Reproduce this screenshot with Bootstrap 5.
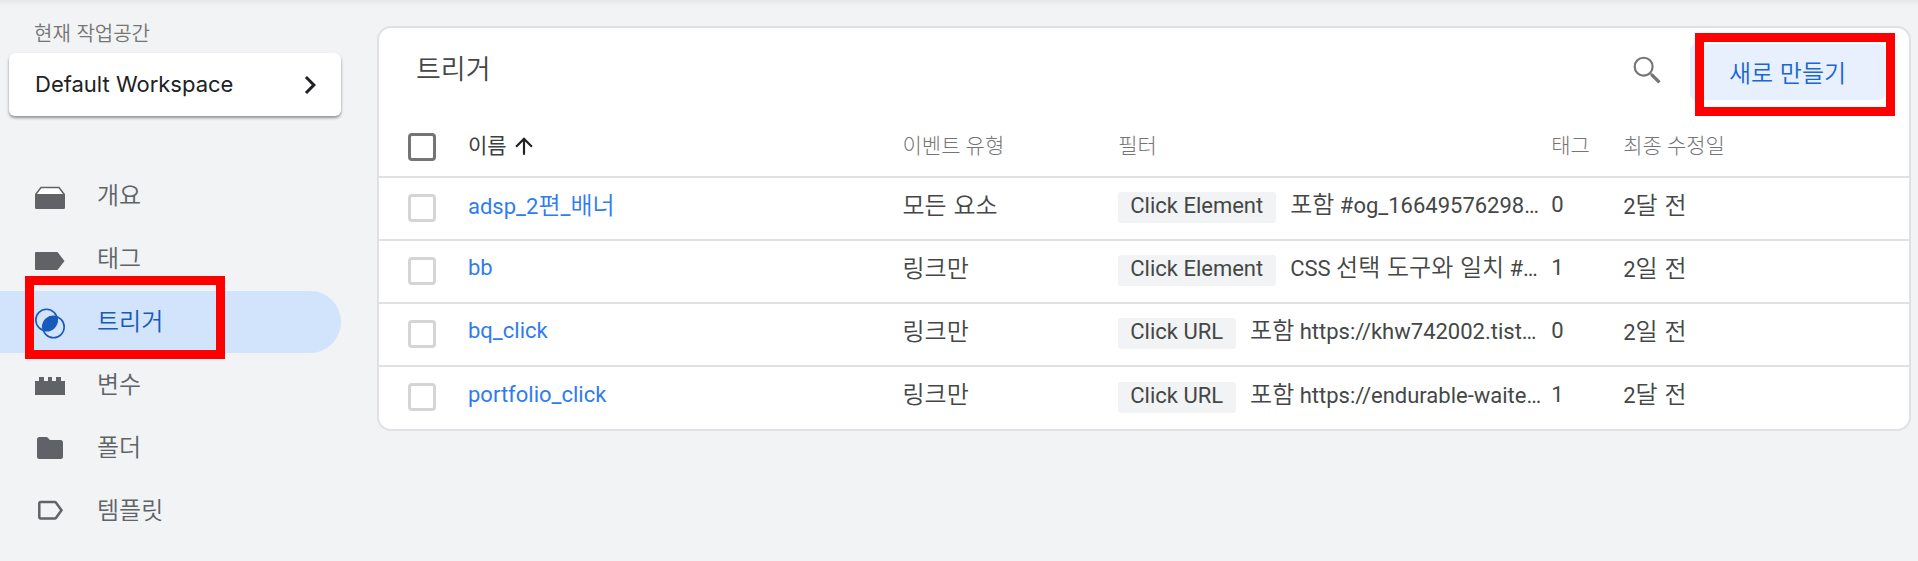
<!DOCTYPE html>
<html lang="ko">
<head>
<meta charset="utf-8">
<meta name="viewport" content="width=device-width, initial-scale=1">
<title>트리거</title>
<link href="https://cdn.jsdelivr.net/npm/bootstrap@5.3.0/dist/css/bootstrap.min.css" rel="stylesheet">
<style>
body{background:#f1f3f4;color:#444746;font-family:Roboto,"Noto Sans CJK KR",sans-serif;font-size:22px;line-height:32px}
.app-shell{min-height:100vh;background:linear-gradient(#e4e6e8,#f1f3f4 6px)}
.side-panel{width:377px}
.ko{font-family:"Noto Sans CJK KR",sans-serif;font-size:24px;font-weight:350}
.side-label{font-size:20px;line-height:28px;color:#757575;padding:19px 0 6px 34px}
.workspace-btn{height:63px;margin:0 36px 0 9px;padding:0 13px 0 26px;border-radius:6px;box-shadow:0 2px 3px #0006;font-family:Inter,sans-serif;font-size:22px;color:#202124}
.side-nav{margin-top:49px;padding-right:36px;gap:1px}
.side-item{height:62px;padding-left:35px;gap:32px;color:#5f6368;text-decoration:none;border-radius:0 32px 32px 0}
.side-item .side-text{padding-bottom:4px}
.side-item svg{margin-top:2px;overflow:visible}
.side-item.active{background:#d2e3fc;color:#185abc}
.callout{position:absolute;width:200px;height:83px;border:9px solid #f00;pointer-events:none}
.side-item .callout{left:25px;top:-15px}
.btn-wrap .callout{left:5px;top:-11px}
.trigger-card{margin:26px 7px 0 0;border:2px solid #dfe1e5;border-radius:14px}
.card-top{height:88px;padding:16px 24px 0 37px}
.card-top h1{font-size:27px;line-height:48px}
.new-btn{width:195px;height:56px;border-radius:6px;background:#e8f0fe;color:#1967d2}
.new-btn:hover{background:#dbe7fd;color:#1967d2}
.trigger-table{table-layout:fixed}
.trigger-table th,.trigger-table td{height:63px;padding:0;vertical-align:middle;white-space:nowrap}
.trigger-table tbody td{padding-bottom:7px}
.trigger-table thead th{height:61px;font-size:21px;font-weight:300;color:#757575}
.trigger-table tbody tr{border-top:2px solid #dfe1e5}
.trigger-table .c-check{width:89px;padding-left:29px}
.trigger-table tbody .c-check{padding-bottom:3px}
.c-name{width:28.4%}
.c-filter{width:28.3%}
.c-event{width:14.1%}
.c-tag{width:72px}
.form-check-input.pick{width:28px;height:28px;margin:1px 0 0;border:3px solid #d5d5d5;border-radius:4px;display:block}
thead .form-check-input.pick{border-color:#757575}
.trigger-table a{color:#2f7cf0;text-decoration:none}
.chip{background:#f1f3f4;border-radius:3px;height:31px;line-height:28px;padding:0 13px 0 12px;margin-right:14px}
.th-name{color:#3c4043}
</style>
</head>
<body>
<div class="app-shell d-flex align-items-start">
  <aside class="side-panel flex-shrink-0">
    <div class="side-label ko">현재 작업공간</div>
    <div class="d-flex"><button type="button" class="workspace-btn btn btn-light bg-white border-0 flex-grow-1 d-flex align-items-center justify-content-between">Default Workspace
      <svg width="36" height="36" viewBox="0 0 24 24" fill="currentColor" aria-hidden="true"><path d="M8.6 16.6 13.2 12 8.6 7.4 10 6l6 6-6 6z"/></svg></button></div>
    <nav class="side-nav d-flex flex-column">
      <a href="#" class="side-item d-flex align-items-center ko"><svg width="30" height="30" fill="currentColor" aria-hidden="true"><path d="M6 5.500h18l5 6.500v3H1v-3z" fill="#fff" stroke="currentColor" stroke-width="1.500"/><path d="M0 12h30v13.500a1.500 1.500 0 0 1-1.500 1.500h-27A1.500 1.500 0 0 1 0 25.500z"/></svg><span class="side-text">개요</span></a>
      <a href="#" class="side-item d-flex align-items-center ko"><svg width="30" height="30" fill="currentColor" aria-hidden="true"><path d="M1 7h21.500l7 9-7 9H1a1 1 0 0 1-1-1V8a1 1 0 0 1 1-1z"/></svg><span class="side-text">태그</span></a>
      <a href="#" class="side-item active position-relative d-flex align-items-center ko" aria-current="page"><svg width="30" height="30" aria-hidden="true"><g fill="none" stroke="currentColor" stroke-width="1.600"><circle cx="11.500" cy="12" r="10.700"/><circle cx="18.500" cy="19" r="10.700"/></g><path d="M21.900 8.800A10.700 10.700 0 0 1 8.100 22.200 10.700 10.700 0 0 1 21.900 8.800z" fill="currentColor"/></svg><span class="side-text">트리거</span><span class="callout"></span></a>
      <a href="#" class="side-item d-flex align-items-center ko"><svg width="30" height="30" fill="currentColor" aria-hidden="true"><path d="M0 10h4V6h5v4h4V6h4v4h4V6h5v4h4v14H0z"/></svg><span class="side-text">변수</span></a>
      <a href="#" class="side-item d-flex align-items-center ko"><svg width="30" height="30" fill="currentColor" aria-hidden="true"><path d="M4.500 3H12l3 3h10.500A2.500 2.500 0 0 1 28 8.500v14a2.500 2.500 0 0 1-2.500 2.500h-21A2.500 2.500 0 0 1 2 22.500v-17A2.500 2.500 0 0 1 4.500 3z"/></svg><span class="side-text">폴더</span></a>
      <a href="#" class="side-item d-flex align-items-center ko"><svg width="30" height="30" fill="none" stroke="currentColor" stroke-width="2.500" aria-hidden="true"><path d="M5.500 5h14.200a1.500 1.500 0 0 1 1.200.6l5.600 7.700-5.600 7.600a1.500 1.500 0 0 1-1.200.6H5.500a1.200 1.200 0 0 1-1.200-1.200V6.200a1.200 1.200 0 0 1 1.200-1.200z"/></svg><span class="side-text">템플릿</span></a>
    </nav>
  </aside>
  <main class="trigger-card card flex-grow-1">
    <header class="card-top d-flex align-items-start">
      <h1 class="ko m-0 me-auto">트리거</h1>
      <button type="button" class="btn p-0 border-0 mt-2 me-4" aria-label="검색"><svg width="37" height="37" viewBox="0 0 24 24" fill="#757575"><path d="M15.500 14h-.79l-.28-.27A6.470 6.470 0 0 0 16 9.500 6.500 6.500 0 1 0 9.500 16c1.610 0 3.090-.59 4.230-1.570l.27.28v.79l5 4.990L20.490 19zm-6 .6a5.100 5.100 0 1 1 0-10.200 5.100 5.100 0 0 1 0 10.200z"/></svg></button>
      <div class="btn-wrap position-relative"><button type="button" class="new-btn btn border-0 ko">새로 만들기</button><span class="callout"></span></div>
    </header>
    <table class="trigger-table w-100">
      <thead><tr>
        <th class="c-check"><input type="checkbox" class="form-check-input pick" aria-label="모두 선택"></th>
        <th class="c-name"><span class="th-name d-inline-flex align-items-center gap-1 fw-normal">이름 <svg width="26" height="26" viewBox="0 0 24 24" fill="#202124" aria-hidden="true"><path d="M4 12l1.410 1.410L11 7.830V20h2V7.830l5.580 5.590L20 12l-8-8z"/></svg></span></th>
        <th class="c-event">이벤트 유형</th><th class="c-filter">필터</th><th class="c-tag">태그</th><th>최종 수정일</th>
      </tr></thead>
      <tbody>
        <tr><td class="c-check"><input type="checkbox" class="form-check-input pick" aria-label="adsp_2편_배너"></td><td><a href="#">adsp_2<span class="ko">편</span>_<span class="ko">배너</span></a></td><td><span class="ko">모든 요소</span></td><td><span class="chip d-inline-block">Click Element</span><span class="ko">포함</span> #og_16649576298…</td><td>0</td><td>2<span class="ko">달 전</span></td></tr>
        <tr><td class="c-check"><input type="checkbox" class="form-check-input pick" aria-label="bb"></td><td><a href="#">bb</a></td><td><span class="ko">링크만</span></td><td><span class="chip d-inline-block">Click Element</span>CSS <span class="ko">선택 도구와 일치</span> #…</td><td>1</td><td>2<span class="ko">일 전</span></td></tr>
        <tr><td class="c-check"><input type="checkbox" class="form-check-input pick" aria-label="bq_click"></td><td><a href="#">bq_click</a></td><td><span class="ko">링크만</span></td><td><span class="chip d-inline-block">Click URL</span><span class="ko">포함</span> https://khw742002.tist…</td><td>0</td><td>2<span class="ko">일 전</span></td></tr>
        <tr><td class="c-check"><input type="checkbox" class="form-check-input pick" aria-label="portfolio_click"></td><td><a href="#">portfolio_click</a></td><td><span class="ko">링크만</span></td><td><span class="chip d-inline-block">Click URL</span><span class="ko">포함</span> https://endurable-waite…</td><td>1</td><td>2<span class="ko">달 전</span></td></tr>
      </tbody>
    </table>
  </main>
</div>
<script src="https://cdn.jsdelivr.net/npm/bootstrap@5.3.0/dist/js/bootstrap.bundle.min.js"></script>
</body>
</html>
